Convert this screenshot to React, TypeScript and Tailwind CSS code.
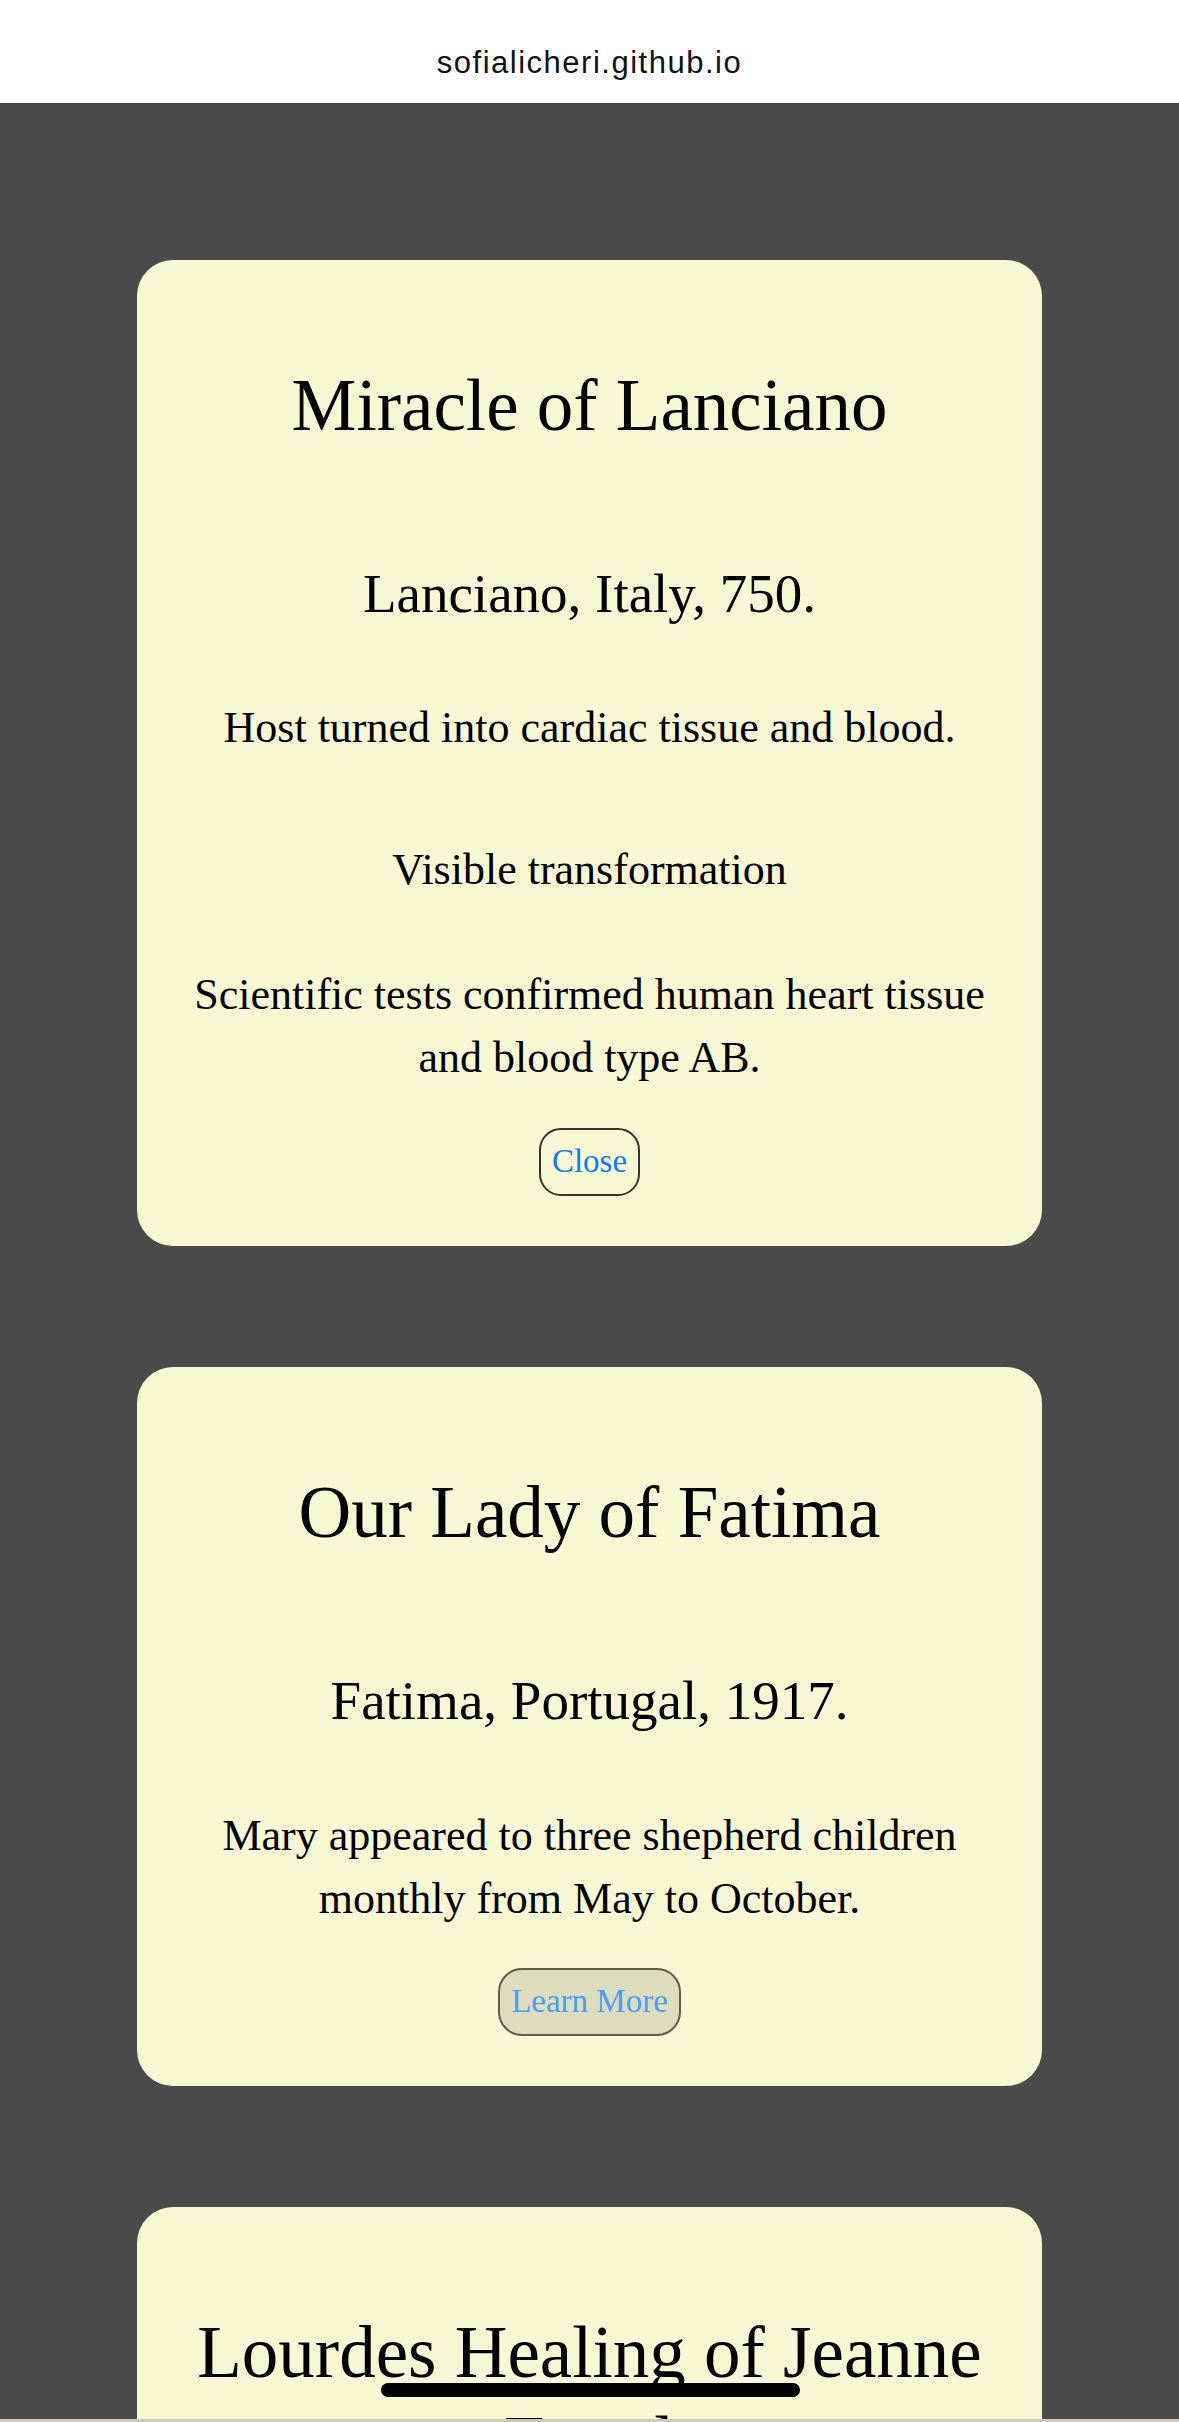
import React from "react"

type Para = { text: string; mt: string }

type Miracle = {
  title: string
  place: string
  paras: Para[]
  open: boolean
  buttonMt: string
}

const miracles: Miracle[] = [
  {
    title: "Miracle of Lanciano",
    place: "Lanciano, Italy, 750.",
    paras: [
      { text: "Host turned into cardiac tissue and blood.", mt: "mt-[67px]" },
      { text: "Visible transformation", mt: "mt-[79px]" },
      { text: "Scientific tests confirmed human heart tissue and blood type AB.", mt: "mt-[62px]" },
    ],
    open: true,
    buttonMt: "mt-[39px]",
  },
  {
    title: "Our Lady of Fatima",
    place: "Fatima, Portugal, 1917.",
    paras: [{ text: "Mary appeared to three shepherd children monthly from May to October.", mt: "mt-[68px]" }],
    open: false,
    buttonMt: "mt-[38px]",
  },
  {
    title: "Lourdes Healing of Jeanne Fretel",
    place: "Lourdes, France, 1948.",
    paras: [{ text: "Healed of tuberculous peritonitis after receiving Communion.", mt: "mt-[68px]" }],
    open: false,
    buttonMt: "mt-[38px]",
  },
]

function MiracleCard({ m }: { m: Miracle }) {
  return (
    <section className="rounded-[36px] bg-[#f7f7d4] px-[32px] pt-[101px] pb-[50px] text-center text-black">
      <h1 className="text-[73px] leading-[90px] font-normal">{m.title}</h1>
      <h2 className="mt-[108px] text-[55px] leading-[70px] font-normal">{m.place}</h2>
      {m.paras.map((p) => (
        <p key={p.text} className={`${p.mt} text-[44px] leading-[63px]`}>
          {p.text}
        </p>
      ))}
      <div className={`${m.buttonMt} flex justify-center`}>
        {m.open ? (
          <button className="flex h-[68px] items-center rounded-[22px] border-2 border-[#333333] px-[11px] text-[33px] text-[#0a7cf7]">
            Close
          </button>
        ) : (
          <button className="flex h-[68px] items-center rounded-[24px] border-2 border-[#5c5c50] bg-[#dedcbf] px-[11px] text-[33px] text-[#4a9ff0]">
            Learn More
          </button>
        )}
      </div>
    </section>
  )
}

export default function App() {
  return (
    <div className="relative h-[2422px] overflow-hidden bg-[#4a4a4a] font-['Liberation_Serif',serif]">
      {/* Browser address bar */}
      <header className="h-[103px] bg-white pt-[45px] text-center font-['Liberation_Sans',sans-serif] text-[31px] leading-[36px] tracking-[1.5px] text-[#111111]">
        sofialicheri.github.io
      </header>

      <main className="flex flex-col gap-[121px] px-[137px] pt-[157px]">
        {miracles.map((m) => (
          <MiracleCard key={m.title} m={m} />
        ))}
      </main>

      {/* Home indicator + toolbar edge */}
      <div className="absolute left-[381px] top-[2383px] h-[14px] w-[419px] rounded-full bg-black" />
      <div className="absolute bottom-0 left-0 h-[3px] w-full bg-[#c9c9bd]" />
    </div>
  )
}
